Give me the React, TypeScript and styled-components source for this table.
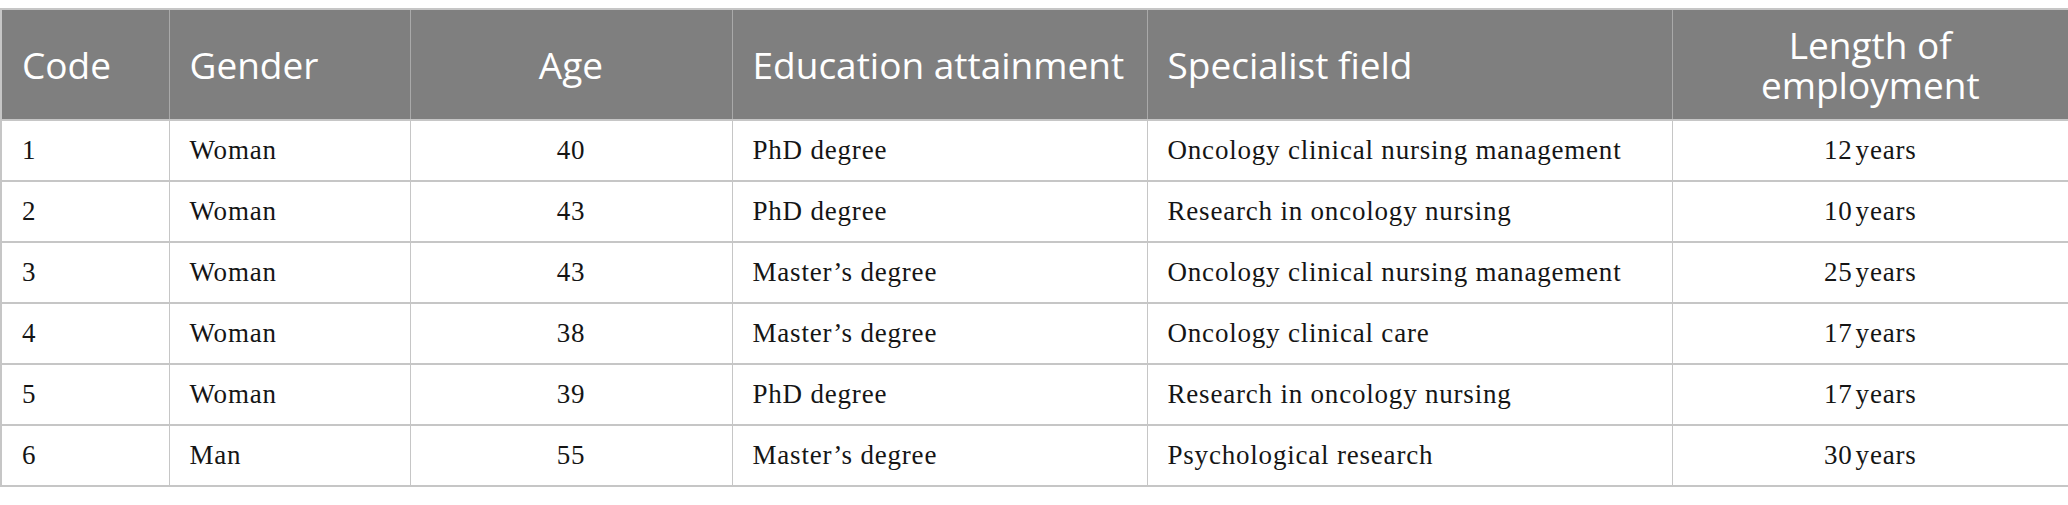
import React from "react";
import styled, { createGlobalStyle } from "styled-components";

const Global = createGlobalStyle`
  html, body { margin: 0; padding: 0; background: #ffffff; }
  body { width: 2068px; }
`;

const Wrap = styled.div`
  padding-top: 8px;
`;

const Table = styled.table`
  width: 2068px;
  border-collapse: collapse;
  table-layout: fixed;
  border: 2px solid #c6c6c6;
`;

const HeadCell = styled.th<{ $align?: string }>`
  background: #7f7f7f;
  color: #ffffff;
  font-family: "Open Sans", "Noto Sans", sans-serif;
  font-weight: 400;
  font-size: 37px;
  line-height: 39px;
  height: 109px;
  padding: 0 20px;
  text-align: ${(p) => p.$align || "left"};
  vertical-align: middle;
  border: 1px solid #a9a9a9;
  border-top: 2px solid #c6c6c6;
  border-bottom: 2px solid #c6c6c6;
`;

const HeadLine = styled.span`
  display: block;
  height: 40px;
  line-height: 40px;
  white-space: nowrap;
`;

const Cell = styled.td<{ $align?: string }>`
  font-family: "Liberation Serif", "Times New Roman", serif;
  font-size: 27px;
  letter-spacing: 0.8px;
  color: #151515;
  height: 59px;
  padding: 0 20px;
  text-align: ${(p) => p.$align || "left"};
  vertical-align: middle;
  border: 1px solid #c6c6c6;
  border-bottom: 2px solid #c6c6c6;
`;

const cols = [168, 241, 322, 415, 525, 397];

const rows = [
  ["1", "Woman", "40", "PhD degree", "Oncology clinical nursing management", "12"],
  ["2", "Woman", "43", "PhD degree", "Research in oncology nursing", "10"],
  ["3", "Woman", "43", "Master\u2019s degree", "Oncology clinical nursing management", "25"],
  ["4", "Woman", "38", "Master\u2019s degree", "Oncology clinical care", "17"],
  ["5", "Woman", "39", "PhD degree", "Research in oncology nursing", "17"],
  ["6", "Man", "55", "Master\u2019s degree", "Psychological research", "30"],
];

const aligns = ["left", "left", "center", "left", "left", "center"];

export default function App() {
  return (
    <Wrap>
      <Global />
      <Table>
        <colgroup>
          {cols.map((w, i) => (
            <col key={i} style={{ width: w }} />
          ))}
        </colgroup>
        <thead>
          <tr>
            <HeadCell>Code</HeadCell>
            <HeadCell>Gender</HeadCell>
            <HeadCell $align="center">Age</HeadCell>
            <HeadCell>Education attainment</HeadCell>
            <HeadCell>Specialist field</HeadCell>
            <HeadCell $align="center">
              <HeadLine>Length of</HeadLine>
              <HeadLine>employment</HeadLine>
            </HeadCell>
          </tr>
        </thead>
        <tbody>
          {rows.map((r) => (
            <tr key={r[0]}>
              {r.map((v, i) => (
                <Cell key={i} $align={aligns[i]}>
                  {i === 5 ? `${v}\u200Ayears` : v}
                </Cell>
              ))}
            </tr>
          ))}
        </tbody>
      </Table>
    </Wrap>
  );
}
